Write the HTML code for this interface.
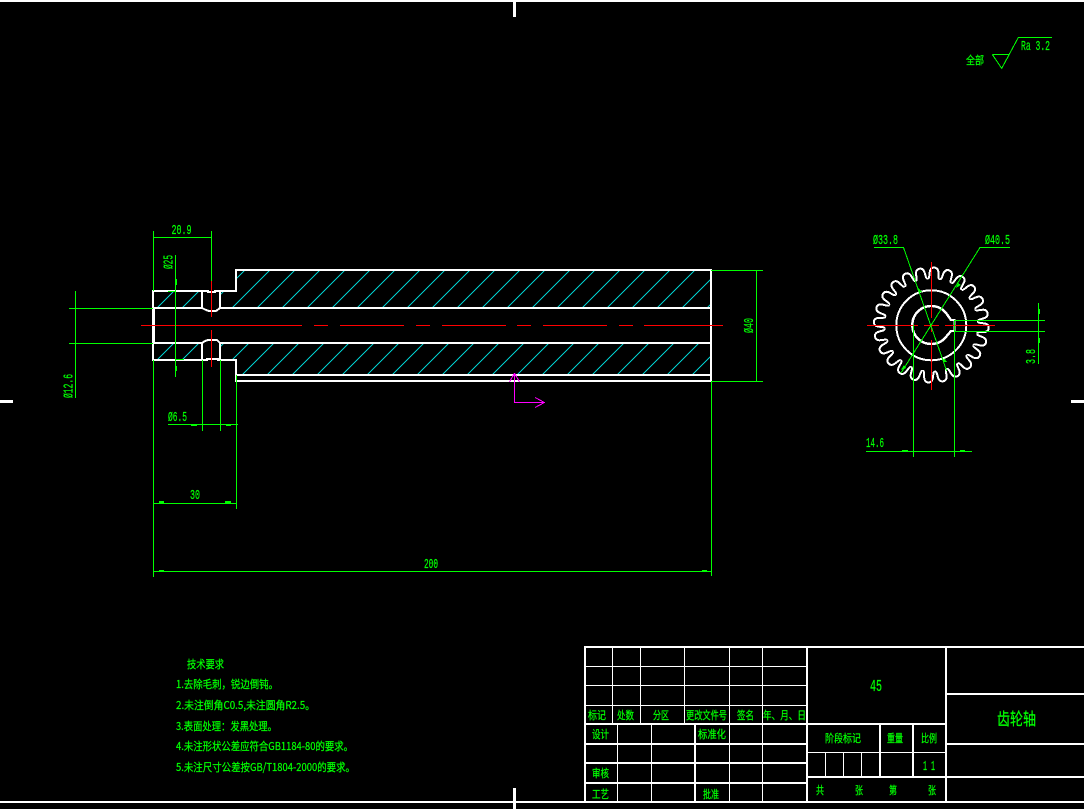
<!DOCTYPE html>
<html><head><meta charset="utf-8"><title>齿轮轴</title>
<style>
html,body{margin:0;padding:0;background:#000;width:1084px;height:809px;overflow:hidden}
svg{display:block}
text{fill:#0f0;stroke:#0f0;stroke-width:.25;font-family:"Liberation Mono",monospace;font-size:14px}
.c text,text.c{font-family:"WenQuanYi Zen Hei","Noto Sans CJK SC",sans-serif;font-size:11px}
</style></head><body>
<svg width="1084" height="809" viewBox="0 0 1084 809" xmlns="http://www.w3.org/2000/svg" shape-rendering="crispEdges">
<defs>
<clipPath id="u"><rect x="236" y="270" width="475" height="38"/><rect x="153" y="291" width="49" height="17"/><rect x="220" y="291" width="16" height="17"/></clipPath>
<clipPath id="l"><rect x="236" y="343" width="475" height="32"/><rect x="153" y="343" width="49" height="17"/><rect x="220" y="343" width="16" height="17"/></clipPath>
<path id="t" d="M-6.1 -46.5C-3.8 -46 -5 -52 -4 -54.5C-3.2 -57 -1.6 -57.5 0 -57.5C1.6 -57.5 3.2 -57 4 -54.5C5 -52 3.8 -46 6.1 -46.5" fill="none" stroke="#fff" stroke-width="2"/>
</defs>
<!-- frame -->
<g fill="#fff">
<rect x="0" y="0" width="1084" height="2"/><rect x="0" y="801" width="1084" height="2"/>
<rect x="513" y="0" width="3" height="17"/><rect x="513" y="788" width="3" height="21"/>
<rect x="0" y="400" width="13" height="3"/><rect x="1071" y="400" width="13" height="3"/>
</g>
<!-- hatch -->
<path clip-path="url(#u)" fill="none" stroke="#0cc" stroke-width="1" d="M195 270l-38 38M220 270l-38 38M245 270l-38 38M270 270l-38 38M295 270l-38 38M320 270l-38 38M345 270l-38 38M370 270l-38 38M395 270l-38 38M420 270l-38 38M445 270l-38 38M470 270l-38 38M495 270l-38 38M520 270l-38 38M545 270l-38 38M570 270l-38 38M595 270l-38 38M620 270l-38 38M645 270l-38 38M670 270l-38 38M695 270l-38 38M720 270l-38 38M745 270l-38 38"/>
<path clip-path="url(#l)" fill="none" stroke="#0cc" stroke-width="1" d="M174 343l-32 32M199 343l-32 32M224 343l-32 32M249 343l-32 32M274 343l-32 32M299 343l-32 32M324 343l-32 32M349 343l-32 32M374 343l-32 32M399 343l-32 32M424 343l-32 32M449 343l-32 32M474 343l-32 32M499 343l-32 32M524 343l-32 32M549 343l-32 32M574 343l-32 32M599 343l-32 32M624 343l-32 32M649 343l-32 32M674 343l-32 32M699 343l-32 32M724 343l-32 32"/>
<!-- shaft -->
<g fill="none" stroke="#fff" stroke-width="2">
<path d="M153 291H208V292H215V291H236V270H711V381H236V360H218V359H207V360H153Z"/>
<path d="M153 308H202L206 310L209 311H216L220 308H711"/>
<path d="M153 343H202L205 341L208 340H217L220 343H711"/>
<path d="M236 375H711"/>
<path d="M202 291V308M220 291V308M202 343V360M220 343V360"/>
<path d="M154 308V343"/>
</g>
<!-- centre lines -->
<path fill="none" stroke="#f00" stroke-width="1" d="M141 325.5H302M314 325.5H328M340 325.5H404M416 325.5H430M442 325.5H506M517 325.5H531M543 325.5H607M619 325.5H633M644 325.5H723M211.5 281V317M211.5 330V367"/>
<!-- gear -->
<g transform="translate(931.3 325)">
<use href="#t" transform="rotate(3)"/><use href="#t" transform="rotate(18)"/><use href="#t" transform="rotate(33)"/><use href="#t" transform="rotate(48)"/><use href="#t" transform="rotate(63)"/><use href="#t" transform="rotate(78)"/><use href="#t" transform="rotate(93)"/><use href="#t" transform="rotate(108)"/><use href="#t" transform="rotate(123)"/><use href="#t" transform="rotate(138)"/><use href="#t" transform="rotate(153)"/><use href="#t" transform="rotate(168)"/><use href="#t" transform="rotate(183)"/><use href="#t" transform="rotate(198)"/><use href="#t" transform="rotate(213)"/><use href="#t" transform="rotate(228)"/><use href="#t" transform="rotate(243)"/><use href="#t" transform="rotate(258)"/><use href="#t" transform="rotate(273)"/><use href="#t" transform="rotate(288)"/><use href="#t" transform="rotate(303)"/><use href="#t" transform="rotate(318)"/><use href="#t" transform="rotate(333)"/><use href="#t" transform="rotate(348)"/>
</g>
<circle cx="931.3" cy="325.3" r="35" fill="none" stroke="#fff" stroke-width="2"/>
<path d="M947 314.3A19 19 0 1 0 947 335.7L951 331H954.5V320H951Z" fill="none" stroke="#fff" stroke-width="2.4"/>
<path fill="none" stroke="#f00" stroke-width="1" d="M867 325.5H918M924 325.5H939M945 325.5H995M931.5 262V318M931.5 324V332M931.5 340V390"/>
<!-- green dims -->
<g fill="none" stroke="#0f0" stroke-width="1">
<path d="M153.5 231V291M211.5 231V281M153 237.5H212"/>
<path d="M175.5 255V377M168 291.5H176M176 359.5H184"/>
<path d="M75.5 291V398M69 308.5H153M69 343.5H153"/>
<path d="M168 424.5H238M202.5 360V431M220.5 360V431"/>
<path d="M236.5 375V509M154 503.5H236M153.5 360V577M154 571.5H711M711.5 381V576"/>
<path d="M711 270.5H763M711 381.5H763M756.5 270V381"/>
<path d="M874 247.5H903.5L946.7 371M1010 247.5H980L901 373"/>
<path d="M866 451.5H972M913.5 325V457M954.5 320V457"/>
<path d="M954 320.5H1045M954 331.5H1045M1038.5 303V364"/>
<path d="M992.3 54.5H1009.3L1001.7 68.3L992.3 54.5M1001.7 68.3L1018.3 37.5H1052"/>
</g>
<g fill="#0f0">
<rect x="175" y="279" width="2" height="6"/><rect x="175" y="366" width="2" height="5"/>
<rect x="191" y="424" width="6" height="2"/><rect x="226" y="424" width="5" height="2"/>
<rect x="159" y="501" width="5" height="2"/><rect x="225" y="501" width="6" height="2"/>
<rect x="159" y="570" width="5" height="2"/><rect x="702" y="570" width="5" height="2"/>
<rect x="902" y="450" width="6" height="2"/><rect x="960" y="450" width="5" height="2"/>
<rect x="1038" y="309" width="2" height="5"/><rect x="1038" y="338" width="2" height="5"/>
<path d="M918 288L922 292L919 293ZM944 358L947 362L943 362ZM958 283L961 285L956 288ZM904 365L906 368L901 370Z"/>
</g>
<!-- UCS -->
<path fill="none" stroke="#f0f" stroke-width="1" d="M514.5 373V402.5H545M514.5 373L509.5 382M514.5 373L519.5 382M544.5 402.5L535 397.5M544.5 402.5L535 407.5"/>
<!-- dim text -->
<text x="171.5" y="234" textLength="20" lengthAdjust="spacingAndGlyphs">20.9</text>
<text x="168" y="421" textLength="19" lengthAdjust="spacingAndGlyphs">Ø6.5</text>
<text x="190" y="499" textLength="10" lengthAdjust="spacingAndGlyphs">30</text>
<text x="424" y="568" textLength="14" lengthAdjust="spacingAndGlyphs">200</text>
<text x="873" y="244" textLength="25" lengthAdjust="spacingAndGlyphs">Ø33.8</text>
<text x="985" y="244" textLength="25" lengthAdjust="spacingAndGlyphs">Ø40.5</text>
<text x="866" y="447" textLength="18" lengthAdjust="spacingAndGlyphs">14.6</text>
<text x="1021" y="50" textLength="29" lengthAdjust="spacingAndGlyphs">Ra 3.2</text>
<text transform="translate(172.5 269) rotate(-90)" textLength="14" lengthAdjust="spacingAndGlyphs">Ø25</text>
<text transform="translate(72.5 398) rotate(-90)" textLength="24" lengthAdjust="spacingAndGlyphs">Ø12.6</text>
<text transform="translate(753 333) rotate(-90)" textLength="15" lengthAdjust="spacingAndGlyphs">Ø40</text>
<text transform="translate(1035 364) rotate(-90)" textLength="15" lengthAdjust="spacingAndGlyphs">3.8</text>
<g class="c">
<text x="966" y="64" textLength="18" lengthAdjust="spacingAndGlyphs">全部</text>
<!-- notes -->
<text x="187" y="668" textLength="37" lengthAdjust="spacingAndGlyphs">技术要求</text>
<text x="176" y="688" textLength="102" lengthAdjust="spacingAndGlyphs">1.去除毛刺，锐边倒钝。</text>
<text x="176" y="709" textLength="139" lengthAdjust="spacingAndGlyphs">2.未注倒角C0.5,未注圆角R2.5。</text>
<text x="176" y="730" textLength="101" lengthAdjust="spacingAndGlyphs">3.表面处理：发黑处理。</text>
<text x="176" y="750" textLength="177" lengthAdjust="spacingAndGlyphs">4.未注形状公差应符合GB1184-80的要求。</text>
<text x="176" y="771" textLength="179" lengthAdjust="spacingAndGlyphs">5.未注尺寸公差按GB/T1804-2000的要求。</text>
<!-- title block text -->
<text x="588" y="719" textLength="18" lengthAdjust="spacingAndGlyphs">标记</text>
<text x="617" y="719" textLength="17" lengthAdjust="spacingAndGlyphs">处数</text>
<text x="653" y="719" textLength="16" lengthAdjust="spacingAndGlyphs">分区</text>
<text x="686" y="719" textLength="41" lengthAdjust="spacingAndGlyphs">更改文件号</text>
<text x="737" y="719" textLength="17" lengthAdjust="spacingAndGlyphs">签名</text>
<text x="763" y="719" textLength="43" lengthAdjust="spacingAndGlyphs">年、月、日</text>
<text x="592" y="738" textLength="17" lengthAdjust="spacingAndGlyphs">设计</text>
<text x="698" y="738" textLength="28" lengthAdjust="spacingAndGlyphs">标准化</text>
<text x="592" y="777" textLength="17" lengthAdjust="spacingAndGlyphs">审核</text>
<text x="592" y="798" textLength="17" lengthAdjust="spacingAndGlyphs">工艺</text>
<text x="703" y="798" textLength="16" lengthAdjust="spacingAndGlyphs">批准</text>
<text x="825" y="742" textLength="36" lengthAdjust="spacingAndGlyphs">阶段标记</text>
<text x="887" y="742" textLength="16" lengthAdjust="spacingAndGlyphs">重量</text>
<text x="921" y="742" textLength="16" lengthAdjust="spacingAndGlyphs">比例</text>
<text x="816" y="794" textLength="8" lengthAdjust="spacingAndGlyphs">共</text>
<text x="855" y="794" textLength="8" lengthAdjust="spacingAndGlyphs">张</text>
<text x="889" y="794" textLength="8" lengthAdjust="spacingAndGlyphs">第</text>
<text x="928" y="794" textLength="8" lengthAdjust="spacingAndGlyphs">张</text>
<text x="997" y="725" textLength="39" lengthAdjust="spacingAndGlyphs" style="font-size:17px">齿轮轴</text>
</g>
<text x="870" y="691" textLength="12" lengthAdjust="spacingAndGlyphs" style="font-size:17px">45</text>
<text x="923" y="770" textLength="12" lengthAdjust="spacingAndGlyphs">1 1</text>
<!-- title block lines -->
<g fill="none" stroke="#fff">
<g stroke-width="1">
<path d="M584 666.5H807M584 685.5H807M584 705.5H807"/>
<path d="M612.5 646V724M640.5 646V724M684.5 646V724M729.5 646V724M762.5 646V724"/>
<path d="M617.5 724V802M651.5 724V802M729.5 724V802M762.5 724V802"/>
<path d="M807 752.5H946M825.5 752V777M843.5 752V777M861.5 752V777"/>
</g>
<g stroke-width="2">
<path d="M584 647H1084M584 802H1084M585 646V802"/>
<path d="M584 724H946M584 744H807M584 763H807M584 783H807"/>
<path d="M695 724V802M807 646V802M946 646V802"/>
<path d="M946 694H1084M946 744H1084M807 777H1084"/>
<path d="M880 724V777M913 724V777"/>
</g>
</g>
</svg>
</body></html>
